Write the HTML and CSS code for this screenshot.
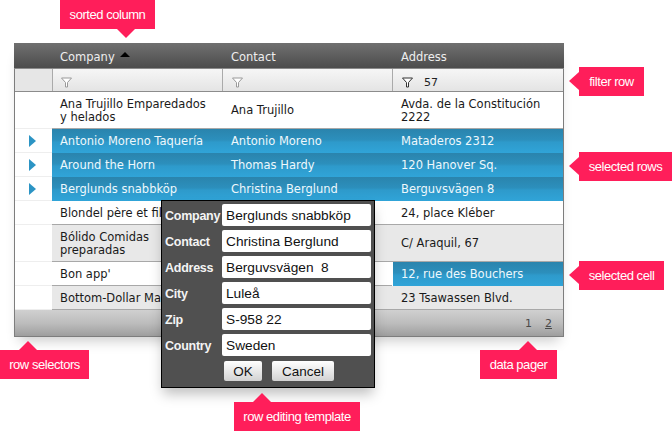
FILE: index.html
```html
<!DOCTYPE html>
<html lang="en">
<head>
<meta charset="utf-8">
<title>Grid</title>
<link rel="stylesheet" href="styles.css">
</head>
<body>
<div class="page">
  <div class="grid">
    <div class="row head">
      <div class="sel"></div>
      <div class="cell">Company <span class="sort"></span></div>
      <div class="cell">Contact</div>
      <div class="cell">Address</div>
    </div>
    <div class="row filter">
      <div class="sel"></div>
      <div class="cell"><svg class="funnel" viewBox="0 0 11 11"><path d="M.5 1h10L6.500 5.500V10h-2V5.500z" fill="#fff" stroke="#999"/></svg></div>
      <div class="cell"><svg class="funnel" viewBox="0 0 11 11"><path d="M.5 1h10L6.500 5.500V10h-2V5.500z" fill="#fff" stroke="#999"/></svg></div>
      <div class="cell"><svg class="funnel" viewBox="0 0 11 11"><path d="M.5 1h10L6.500 5.500V10h-2V5.500z" fill="#fff" stroke="#333"/></svg><span class="fval">57</span></div>
    </div>
    <div class="row data tall">
      <div class="sel"></div>
      <div class="cell">Ana Trujillo Emparedados y&nbsp;helados</div>
      <div class="cell">Ana Trujillo</div>
      <div class="cell">Avda. de la Constitución 2222</div>
    </div>
    <div class="row data selected">
      <div class="sel"><span class="arrow"></span></div>
      <div class="cell">Antonio Moreno Taquería</div>
      <div class="cell">Antonio Moreno</div>
      <div class="cell">Mataderos 2312</div>
    </div>
    <div class="row data selected">
      <div class="sel"><span class="arrow"></span></div>
      <div class="cell">Around the Horn</div>
      <div class="cell">Thomas Hardy</div>
      <div class="cell">120 Hanover Sq.</div>
    </div>
    <div class="row data selected">
      <div class="sel"><span class="arrow"></span></div>
      <div class="cell">Berglunds snabbköp</div>
      <div class="cell">Christina Berglund</div>
      <div class="cell">Berguvsvägen 8</div>
    </div>
    <div class="row data">
      <div class="sel"></div>
      <div class="cell">Blondel père et fil</div>
      <div class="cell"></div>
      <div class="cell">24, place Kléber</div>
    </div>
    <div class="row data tall alt">
      <div class="sel"></div>
      <div class="cell">Bólido Comidas preparadas</div>
      <div class="cell"></div>
      <div class="cell">C/ Araquil, 67</div>
    </div>
    <div class="row data">
      <div class="sel"></div>
      <div class="cell">Bon app'</div>
      <div class="cell"></div>
      <div class="cell picked">12, rue des Bouchers</div>
    </div>
    <div class="row data alt">
      <div class="sel"></div>
      <div class="cell">Bottom-Dollar Ma</div>
      <div class="cell"></div>
      <div class="cell">23 Tsawassen Blvd.</div>
    </div>
    <div class="pager"><span>1</span><a>2</a></div>
  </div>

  <form class="editor">
    <label class="field"><span>Company</span><b class="input">Berglunds snabbköp</b></label>
    <label class="field"><span>Contact</span><b class="input">Christina Berglund</b></label>
    <label class="field"><span>Address</span><b class="input">Berguvsvägen&nbsp; 8</b></label>
    <label class="field"><span>City</span><b class="input">Luleå</b></label>
    <label class="field"><span>Zip</span><b class="input">S-958 22</b></label>
    <label class="field"><span>Country</span><b class="input">Sweden</b></label>
    <div class="buttons"><span class="btn ok">OK</span><span class="btn cancel">Cancel</span></div>
  </form>

  <div class="tag down sorted">sorted column</div>
  <div class="tag left filter-tag">filter row</div>
  <div class="tag left rows-tag">selected rows</div>
  <div class="tag left cell-tag">selected cell</div>
  <div class="tag up sel-tag">row selectors</div>
  <div class="tag up pager-tag">data pager</div>
  <div class="tag up edit-tag">row editing template</div>
</div>
</body>
</html>
```
FILE: styles.css
```css
html, body { margin: 0; padding: 0; background: #fff; }
.page {
  position: relative;
  width: 672px;
  height: 431px;
  overflow: hidden;
  padding: 43px 0 0 14px;
  box-sizing: border-box;
  font-family: "DejaVu Sans", Verdana, sans-serif;
  font-size: 11.5px;
  color: #1a1a1a;
}
.grid {
  width: 550px;
  box-sizing: border-box;
  border: 1px solid #7d7d7d;
  border-top: 0;
  box-shadow: 0 9px 12px -5px rgba(0,0,0,.2);
  background: #fff;
}
.row {
  display: grid;
  grid-template-columns: 37px 170px 170px 171px;
  align-items: stretch;
}
.cell, .sel {
  display: flex;
  align-items: center;
  box-sizing: border-box;
  padding: 0 6px 0 9px;
  line-height: 13px;
}
.cell:nth-child(2) { padding-left: 8px; }
.sel { padding: 0; justify-content: center; }

.head {
  height: 26px;
  margin: 0 -1px;
  grid-template-columns: 38px 170px 170px 172px;
  background: linear-gradient(#707070, #5e5e5e 50%, #4c4c4c);
  color: #eee;
  border-bottom: 1px solid #8a8a8a;
  box-sizing: border-box;
}
.head .cell { padding-top: 3px; }
.head .cell:nth-child(2) { white-space: pre; padding-top: 4px; }
.sort {
  display: inline-block;
  width: 0;
  height: 0;
  margin: -6px 0 0 2px;
  border: 5px solid transparent;
  border-top: 0;
  border-bottom: 5px solid #000;
}

.filter {
  height: 23px;
  background: linear-gradient(#f6f6f6, #e4e4e4);
  border-bottom: 1px solid #8c8c8c;
  box-sizing: border-box;
}
.filter .sel { background: #e6e6e6; }
.filter .cell { border-left: 1px solid #aaa; padding: 5px 0 0 9px; }
.filter .cell:nth-child(2) { padding-left: 8px; }
.funnel { width: 11px; height: 11px; }
.fval { margin-left: 11px; font-size: 11px; color: #222; font-weight: 500; }

.data { height: 24px; }
.data .sel { border-bottom: 1px solid #eee; }
.data .cell { border-bottom: 1px solid #a8a8a8; padding-top: 1px; }
.tall { height: 37px; }
.alt .cell { background: #e8e8e8; }
.selected .cell, .picked {
  color: #eef8fc;
  background: linear-gradient(#2a84ad, #2c8fbc 45%, #2e9acb 55%, #30a4d8);
}
.data.selected .cell { border: 0; padding-top: 1px; }
.data .picked { border: 0; margin-left: 1px; padding-left: 8px; padding-top: 1px; }
.arrow {
  width: 0;
  height: 0;
  margin: 1px 3px 0 0;
  border-left: 7px solid #2c94c4;
  border-top: 6px solid transparent;
  border-bottom: 6px solid transparent;
}
.pager {
  height: 26px;
  box-sizing: border-box;
  display: flex;
  justify-content: flex-end;
  align-items: center;
  gap: 13px;
  padding: 0 11px 0 0;
  background: linear-gradient(#d0d0d0, #bdbdbd 50%, #9e9e9e);
  color: #4a4a4a;
  font-size: 11px;
}
.pager a { text-decoration: underline; }

.editor {
  position: absolute;
  left: 161px;
  top: 200px;
  width: 214px;
  height: 188px;
  box-sizing: border-box;
  padding: 3px 3px 0 3px;
  background: #505050;
  border: 1px solid #000;
  box-shadow: 0 8px 12px -2px rgba(0,0,0,.25);
  font-family: "Liberation Sans", Arial, sans-serif;
}
.field {
  display: flex;
  align-items: center;
  height: 22px;
  margin-bottom: 4px;
}
.field span {
  width: 57px;
  padding-top: 1px;
  color: #f4f4f4;
  font-weight: bold;
  font-size: 12.5px;
  letter-spacing: -0.25px;
}
.input {
  flex: 1;
  height: 22px;
  line-height: 23px;
  background: #fff;
  border-radius: 2px;
  color: #111;
  font-weight: normal;
  font-size: 13.7px;
  padding-left: 4px;
}
.buttons {
  display: flex;
  gap: 10px;
  padding: 1px 0 0 59px;
}
.btn {
  height: 20px;
  line-height: 21px;
  text-align: center;
  font-size: 13.5px;
  color: #111;
  background: linear-gradient(#fff, #d2d2d2);
  border-radius: 2px;
}
.ok { width: 38px; }
.cancel { width: 62px; }

.tag {
  position: absolute;
  height: 29px;
  line-height: 29px;
  background: #ff1e5a;
  color: #fff;
  text-align: center;
  font-family: "Liberation Sans", Arial, sans-serif;
  font-size: 13px;
  letter-spacing: -0.45px;
}
.tag::after {
  content: "";
  position: absolute;
  width: 0;
  height: 0;
  border: 9px solid transparent;
}
.left::after { left: -10px; top: 5px; border-left: 0; border-right: 10px solid #ff1e5a; }
.up::after { top: -9px; border-top: 0; border-bottom: 9px solid #ff1e5a; }
.down::after { bottom: -9px; border-bottom: 0; border-top: 9px solid #ff1e5a; }
.sorted { left: 60px; top: 0; width: 95px; }
.sorted::after { left: 57px; }
.filter-tag { left: 579px; top: 67px; width: 65px; }
.rows-tag { left: 579px; top: 152px; width: 93px; }
.cell-tag { left: 579px; top: 261px; width: 85px; }
.sel-tag { left: 0; top: 350px; width: 89px; }
.sel-tag::after { left: 19px; }
.pager-tag { left: 480px; top: 350px; width: 77px; }
.pager-tag::after { left: 39px; }
.edit-tag { left: 234px; top: 402px; width: 126px; }
.edit-tag::after { left: 19px; }
```
